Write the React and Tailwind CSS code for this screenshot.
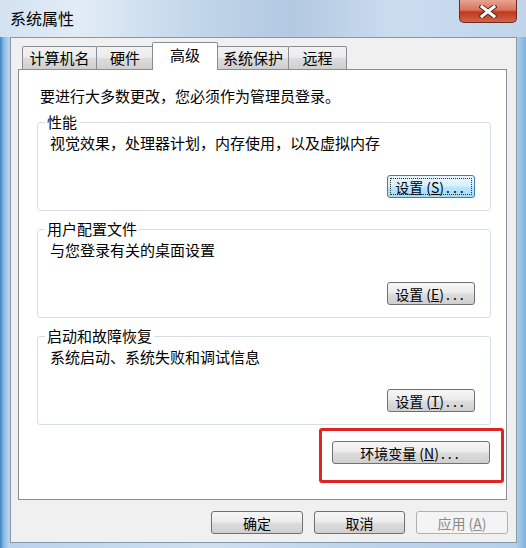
import React from 'react';

const font = { fontFamily: '"Noto Sans CJK SC", "Noto Sans", sans-serif' };

const Button = ({ children, width, focused, disabled }) => {
    let cls = 'border-[#707070] bg-[linear-gradient(180deg,#f6f6f6_0%,#ebebeb_48%,#dddddd_52%,#cfcfcf_100%)] text-black';
    if (focused) {
        cls = 'border-[#3c7fb1] bg-[linear-gradient(180deg,#eaf6fd_0%,#d9f0fc_48%,#bee6fd_52%,#a7d9f5_100%)] text-black';
    }
    if (disabled) {
        cls = 'border-[#adb2b5] bg-[#f4f4f4] text-[#8a8a8a]';
    }
    return (
        <div className={`${width} h-[23px] p-[2px] border rounded-[3px] ${cls}`}>
            <div className={`h-full flex items-center justify-center text-[14px] leading-none border ${focused ? 'border-dotted border-[#333]' : 'border-transparent'}`}>
                {children}
            </div>
        </div>
    );
};

// "(X)..." part of a button label, with the access key underlined
const Key = ({ k, dots = true }) => (
    <>
        <span className="ml-[3px]">(<span className="underline">{k}</span>)</span>
        {dots && <span className="tracking-[3px] ml-[2px]">...</span>}
    </>
);

const Group = ({ title, text, label }) => (
    <fieldset className="border border-[#d5dfe5] rounded-[3px] px-[12px] pb-[12px]">
        <legend className="-ml-[5px] px-[2px] leading-[20px] text-[15px]">{title}</legend>
        <div className="mt-[1px] leading-[20px] text-[15px]">{text}</div>
        <div className="mt-[22px] flex justify-end pr-[3px]">
            <Button width="w-[88px]" focused={label === 'S'}>
                设置<Key k={label} />
            </Button>
        </div>
    </fieldset>
);

const tabs = [
    { name: '计算机名', w: 'w-[75px] ml-[4px]' },
    { name: '硬件', w: 'w-[58px] -ml-px' },
    { name: '高级', w: 'w-[66px] -ml-[2px]', active: true },
    { name: '系统保护', w: 'w-[72px] -ml-px' },
    { name: '远程', w: 'w-[59px] -ml-px' },
];

export default function App() {
    return (
        <div style={font} className="w-[526px] h-[548px] overflow-hidden flex flex-col bg-[linear-gradient(90deg,#3f82c4_0px,#8dbbe3_4px,#b9d3ec_9px,#cfdff0_40%,#bcd3ea_70%,#b5d0ea_98%,#7fb2df_100%)] text-black">
            {/* title bar */}
            <div className="h-[37px] flex items-start justify-between bg-[linear-gradient(90deg,#d3e2f1_0%,#e2ecf6_15%,#c5d8eb_35%,#b2c9e1_55%,#cbdcee_75%,#c0d5ea_100%)]">
                <div className="pl-[10px] pt-[8px] text-[16px] leading-[20px]">系统属性</div>
                <div className="mr-[9px] w-[58px] h-[23px] rounded-b-[5px] border border-t-0 border-[#6d2a22] bg-[linear-gradient(180deg,#e8a492_0%,#d8735d_45%,#c2381c_55%,#d0644a_100%)] flex items-center justify-center">
                    <svg width="18" height="13" viewBox="0 0 18 13">
                        <path d="M3 1.8 L15 11.2 M15 1.8 L3 11.2" stroke="#5a2a24" strokeWidth="5" strokeLinecap="square" />
                        <path d="M3 1.8 L15 11.2 M15 1.8 L3 11.2" stroke="#ffffff" strokeWidth="3" strokeLinecap="square" />
                    </svg>
                </div>
            </div>

            {/* client area */}
            <div className="ml-[10px] mr-[9px] h-[506px] border border-[#8497ab] bg-[#f0f0f0] flex flex-col">
                <div className="pl-[7px] pr-[9px] pt-[4px]">
                    <div className="flex items-end h-[27px]">
                        {tabs.map((t) =>
                            t.active ? (
                                <div key={t.name} className={`${t.w} relative z-10 h-[28px] -mb-px bg-white border border-b-0 border-[#898c95] rounded-t-[2px] flex items-start justify-center pt-[2px] text-[15px] leading-[20px]`}>
                                    {t.name}
                                </div>
                            ) : (
                                <div key={t.name} className={`${t.w} h-[23px] border border-b-0 border-[#898c95] rounded-t-[2px] bg-[linear-gradient(180deg,#f2f2f2_0%,#ebebeb_50%,#dddddd_51%,#cfcfcf_100%)] flex items-center justify-center text-[15px] leading-[20px]`}>
                                    {t.name}
                                </div>
                            )
                        )}
                    </div>

                    {/* tab panel */}
                    <div className="h-[431px] border border-[#898c95] bg-white px-[18px] pr-[15px] pt-[16px] flex flex-col">
                        <div className="pl-[3px] leading-[20px] text-[15px]">要进行大多数更改，您必须作为管理员登录。</div>
                        <div className="mt-[6px] flex flex-col gap-[8px]">
                            <Group title="性能" text="视觉效果，处理器计划，内存使用，以及虚拟内存" label="S" />
                            <Group title="用户配置文件" text="与您登录有关的桌面设置" label="E" />
                            <Group title="启动和故障恢复" text="系统启动、系统失败和调试信息" label="T" />
                        </div>
                        <div className="mt-[3px] flex justify-end -mr-[13px]">
                            <div className="border-[3px] border-[#e02424] rounded-[3px] pl-[10px] pr-[11px] pt-[10px] pb-[16px]">
                                <Button width="w-[158px]">
                                    环境变量<Key k="N" />
                                </Button>
                            </div>
                        </div>
                    </div>
                </div>

                {/* bottom buttons */}
                <div className="mt-[11px] flex justify-end gap-[11px] pr-[8px]">
                    <Button width="w-[92px]">确定</Button>
                    <Button width="w-[91px]">取消</Button>
                    <Button width="w-[92px]" disabled>
                        应用<Key k="A" dots={false} />
                    </Button>
                </div>
            </div>
        </div>
    );
}
